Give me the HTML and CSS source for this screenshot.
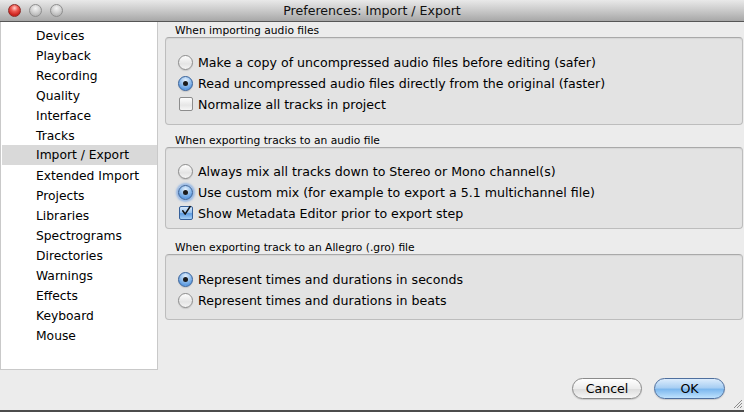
FILE: index.html
```html
<!DOCTYPE html>
<html>
<head>
<meta charset="utf-8">
<link rel="stylesheet" href="styles.css">
</head>
<body>
<div class="window">
  <header class="titlebar">
    <div class="lights">
      <span class="light red"></span>
      <span class="light"></span>
      <span class="light"></span>
    </div>
    <div class="title">Preferences: Import / Export</div>
    <div class="spacer"></div>
  </header>
  <div class="body">
    <ul class="sidebar">
      <li>Devices</li>
      <li>Playback</li>
      <li>Recording</li>
      <li>Quality</li>
      <li>Interface</li>
      <li>Tracks</li>
      <li class="selected">Import / Export</li>
      <li>Extended Import</li>
      <li>Projects</li>
      <li>Libraries</li>
      <li>Spectrograms</li>
      <li>Directories</li>
      <li>Warnings</li>
      <li>Effects</li>
      <li>Keyboard</li>
      <li>Mouse</li>
    </ul>
    <main class="content">
      <section class="group g1">
        <div class="group-label">When importing audio files</div>
        <div class="group-box">
          <div class="opt"><span class="radio"></span>Make a copy of uncompressed audio files before editing (safer)</div>
          <div class="opt"><span class="radio on"></span>Read uncompressed audio files directly from the original (faster)</div>
          <div class="opt"><span class="check"></span>Normalize all tracks in project</div>
        </div>
      </section>
      <section class="group g2">
        <div class="group-label">When exporting tracks to an audio file</div>
        <div class="group-box">
          <div class="opt"><span class="radio"></span>Always mix all tracks down to Stereo or Mono channel(s)</div>
          <div class="opt"><span class="radio on focus"></span>Use custom mix (for example to export a 5.1 multichannel file)</div>
          <div class="opt"><span class="check on"><svg viewBox="0 0 14 14" width="14" height="14"><path d="M3.2 6.8 L6 10.6 L11.8 1.8" fill="none" stroke="#111" stroke-width="1.8" stroke-linecap="round" stroke-linejoin="round"/></svg></span>Show Metadata Editor prior to export step</div>
        </div>
      </section>
      <section class="group g3">
        <div class="group-label">When exporting track to an Allegro (.gro) file</div>
        <div class="group-box">
          <div class="opt"><span class="radio on"></span>Represent times and durations in seconds</div>
          <div class="opt"><span class="radio"></span>Represent times and durations in beats</div>
        </div>
      </section>
    </main>
  </div>
  <footer class="footer">
    <button class="btn">Cancel</button>
    <button class="btn default">OK</button>
    <svg class="grip" viewBox="0 0 11 11" width="11" height="11"><path d="M10 2 L2 10 M10 5 L5 10 M10 8 L8 10" stroke="#8a8a8a" stroke-width="1"/></svg>
  </footer>
</div>
</body>
</html>
```

FILE: styles.css
```css
html, body {
  margin: 0;
  padding: 0;
}
body {
  width: 744px;
  height: 412px;
  overflow: hidden;
  background: #ececec;
  font-family: "DejaVu Sans", "Noto Sans", sans-serif;
  color: #000;
}
.window {
  display: flex;
  flex-direction: column;
  height: 412px;
}
.titlebar {
  height: 22px;
  box-sizing: border-box;
  border-bottom: 1px solid #565656;
  background: linear-gradient(#e9e9e9, #c6c6c6 55%, #a7a7a7);
  display: grid;
  grid-template-columns: 1fr auto 1fr;
  align-items: center;
}
.lights {
  display: flex;
  gap: 8px;
  padding-left: 8px;
}
.light {
  width: 13px;
  height: 13px;
  border-radius: 50%;
  box-sizing: border-box;
  border: 1px solid #8e8e8e;
  background: radial-gradient(circle at 50% 30%, #f4f4f4 0, #d2d2d2 45%, #b4b4b4 80%, #c8c8c8 100%);
}
.light.red {
  border-color: #8d2b27;
  background: radial-gradient(circle at 50% 28%, #ffd0cc 0, #ee5a52 35%, #c81e1a 75%, #e8544a 100%);
}
.title {
  font-size: 12.6px;
  color: #111;
  line-height: 21px;
}
.body {
  display: flex;
  height: 348px;
}
.sidebar {
  list-style: none;
  margin: 0;
  padding: 4px 0 0 1px;
  width: 158px;
  height: 348px;
  box-sizing: border-box;
  background: #fff;
  border-left: 1px solid #c9c9c9;
  border-right: 1px solid #c9c9c9;
  border-bottom: 1px solid #c9c9c9;
  font-size: 12.3px;
}
.sidebar li {
  height: 20px;
  line-height: 20px;
  padding-left: 34px;
}
.sidebar li.selected {
  background: #d9d9d9;
  margin-top: -1px;
  padding-top: 1px;
  height: 19px;
  line-height: 19px;
  margin-bottom: 1px;
}
.content {
  flex: 1;
  padding: 2px 1px 0 7px;
}
.group-label {
  font-size: 10.7px;
  line-height: 13px;
  padding-left: 10px;
}
.g2 { margin-top: 9px; }
.g3 { margin-top: 12px; }
.group-box {
  border: 1px solid #bdbdbd;
  border-top-color: #a9a9a9;
  border-radius: 4px;
  background: #e3e3e3;
  padding: 13px 0 10px 12px;
  box-shadow: inset 0 1px 1px rgba(0,0,0,0.06);
}
.g2 .group-box { padding-top: 12px; padding-bottom: 5px; }
.g3 .group-box { padding-top: 13px; padding-bottom: 9px; }
.opt {
  display: flex;
  align-items: center;
  height: 21px;
  font-size: 12.6px;
  gap: 5px;
  padding-top: 1px;
  box-sizing: border-box;
}
.radio {
  width: 15px;
  height: 15px;
  box-sizing: border-box;
  border-radius: 50%;
  border: 1px solid #8c8c8c;
  background: linear-gradient(#fdfdfd, #e4e4e4 60%, #f4f4f4);
  box-shadow: 0 1px 1px rgba(0,0,0,0.12);
  display: flex;
  align-items: center;
  justify-content: center;
  flex: none;
}
.radio.on {
  border-color: #35609a;
  background: radial-gradient(circle at 50% 25%, #e4f0fc 0, #9cc4ee 40%, #5e9be0 75%, #8cc0f2 100%);
}
.radio.on::after {
  content: "";
  width: 5px;
  height: 5px;
  border-radius: 50%;
  background: #1b1b1b;
}
.radio.focus {
  box-shadow: 0 0 2px 2px rgba(90, 150, 230, 0.55);
}
.check {
  width: 14px;
  height: 14px;
  box-sizing: border-box;
  border: 1px solid #8c8c8c;
  border-radius: 2px;
  background: linear-gradient(#fdfdfd, #e6e6e6 60%, #f6f6f6);
  margin-left: 1px;
  display: flex;
  flex: none;
}
.check.on {
  border-color: #35609a;
  background: linear-gradient(#d9eafb, #8fbcec 50%, #5d9be0 55%, #a6d0f6);
}
.check svg {
  margin: -3px 0 0 0;
}
.footer {
  flex: 1;
  display: flex;
  justify-content: flex-end;
  align-items: flex-start;
  padding: 8px 0 0 0;
  border-bottom: 2px solid #4c4c4c;
  position: relative;
}
.btn {
  font-family: "DejaVu Sans", sans-serif;
  font-size: 12.6px;
  height: 21px;
  border-radius: 11px;
  border: 1px solid #8a8a8a;
  padding: 0;
  background: linear-gradient(#ffffff, #ececec 50%, #dcdcdc 52%, #f6f6f6);
  color: #000;
  box-shadow: 0 1px 1px rgba(0,0,0,0.15);
}
.btn:first-of-type {
  width: 70px;
  margin-right: 12px;
}
.btn.default {
  width: 71px;
  margin-right: 19px;
  border-color: #4e6f9e;
  background: linear-gradient(#dcecfc, #a9cff3 45%, #7db8ee 55%, #bfe2fd);
}
.grip {
  position: absolute;
  right: 1px;
  bottom: 1px;
}
```
